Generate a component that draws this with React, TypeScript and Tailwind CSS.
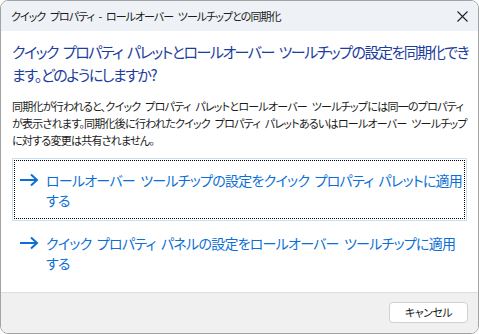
const jp = "font-['Noto_Sans_CJK_JP','Noto_Sans',sans-serif] [font-feature-settings:'palt'] [word-spacing:3px]";

function Arrow() {
  return (
    <svg width="20" height="14" viewBox="0 0 20 14" className="shrink-0">
      <path d="M1 7 H18 M12 1.5 L18 7 L12 12.5" fill="none" stroke="#0b6fd6" strokeWidth="2" />
    </svg>
  );
}

function CommandLink({ lines, focused }: { lines: string[]; focused?: boolean }) {
  return (
    <div className={`border ${focused ? "border-[#c6e0f5]" : "border-transparent"} p-[1px]`}>
      <div className={`flex items-start pl-[4px] pt-[9px] pb-[8px] border border-dotted ${focused ? "border-black" : "border-transparent"}`}>
        <div className="mt-[3px] mr-[7px]"><Arrow /></div>
        <div className="text-[14px] leading-[20px] tracking-[-0.75px] text-[#0b6fd6] whitespace-nowrap">
          {lines.map((l) => (
            <div key={l}>{l}</div>
          ))}
        </div>
      </div>
    </div>
  );
}

export default function App() {
  return (
    <div className={`w-[479px] h-[334px] bg-white ${jp}`}>
      <div className="h-full rounded-[8px] border border-[#a3a3a3] overflow-hidden flex flex-col">
        {/* タイトルバー */}
        <div className="h-[30px] bg-[#eef2f6] flex items-center justify-between pl-[10px] pr-[10px] shrink-0">
          <span className="text-[11px] tracking-[-0.95px] text-[#1a1a1a]">クイック プロパティ - ロールオーバー ツールチップとの同期化</span>
          <svg width="11" height="11" viewBox="0 0 11 11">
            <path d="M0.5 0.5 L10.5 10.5 M10.5 0.5 L0.5 10.5" stroke="#222" strokeWidth="1.1" />
          </svg>
        </div>

        {/* 本文 */}
        <div className="flex-1 bg-white px-[11px] pt-[9px]">
          <div className="text-[15px] leading-[23px] tracking-[-1.5px] text-[#1c3d9c] whitespace-nowrap">
            <div>クイック プロパティ パレットとロールオーバー ツールチップの設定を同期化でき</div>
            <div>ます。どのようにしますか?</div>
          </div>
          <div className="mt-[12px] text-[11px] leading-[17px] tracking-[-0.75px] text-[#1a1a1a] whitespace-nowrap">
            <div>同期化が行われると、クイック プロパティ パレットとロールオーバー ツールチップには同一のプロパティ</div>
            <div>が表示されます。同期化後に行われたクイック プロパティ パレットあるいはロールオーバー ツールチップ</div>
            <div>に対する変更は共有されません。</div>
          </div>
          <div className="mt-[9px]">
            <CommandLink focused lines={["ロールオーバー ツールチップの設定をクイック プロパティ パレットに適用", "する"]} />
            <CommandLink lines={["クイック プロパティ パネルの設定をロールオーバー ツールチップに適用", "する"]} />
          </div>
        </div>

        {/* フッター */}
        <div className="h-[41px] bg-[#f0f0f0] border-t border-[#dedede] flex justify-end items-start pt-[9px] pr-[10px] shrink-0">
          <button className="w-[79px] h-[21px] bg-white border border-[#d0d0d0] rounded-[4px] text-[11px] tracking-[-0.5px] text-[#1a1a1a] flex items-center justify-center">
            キャンセル
          </button>
        </div>
      </div>
    </div>
  );
}
